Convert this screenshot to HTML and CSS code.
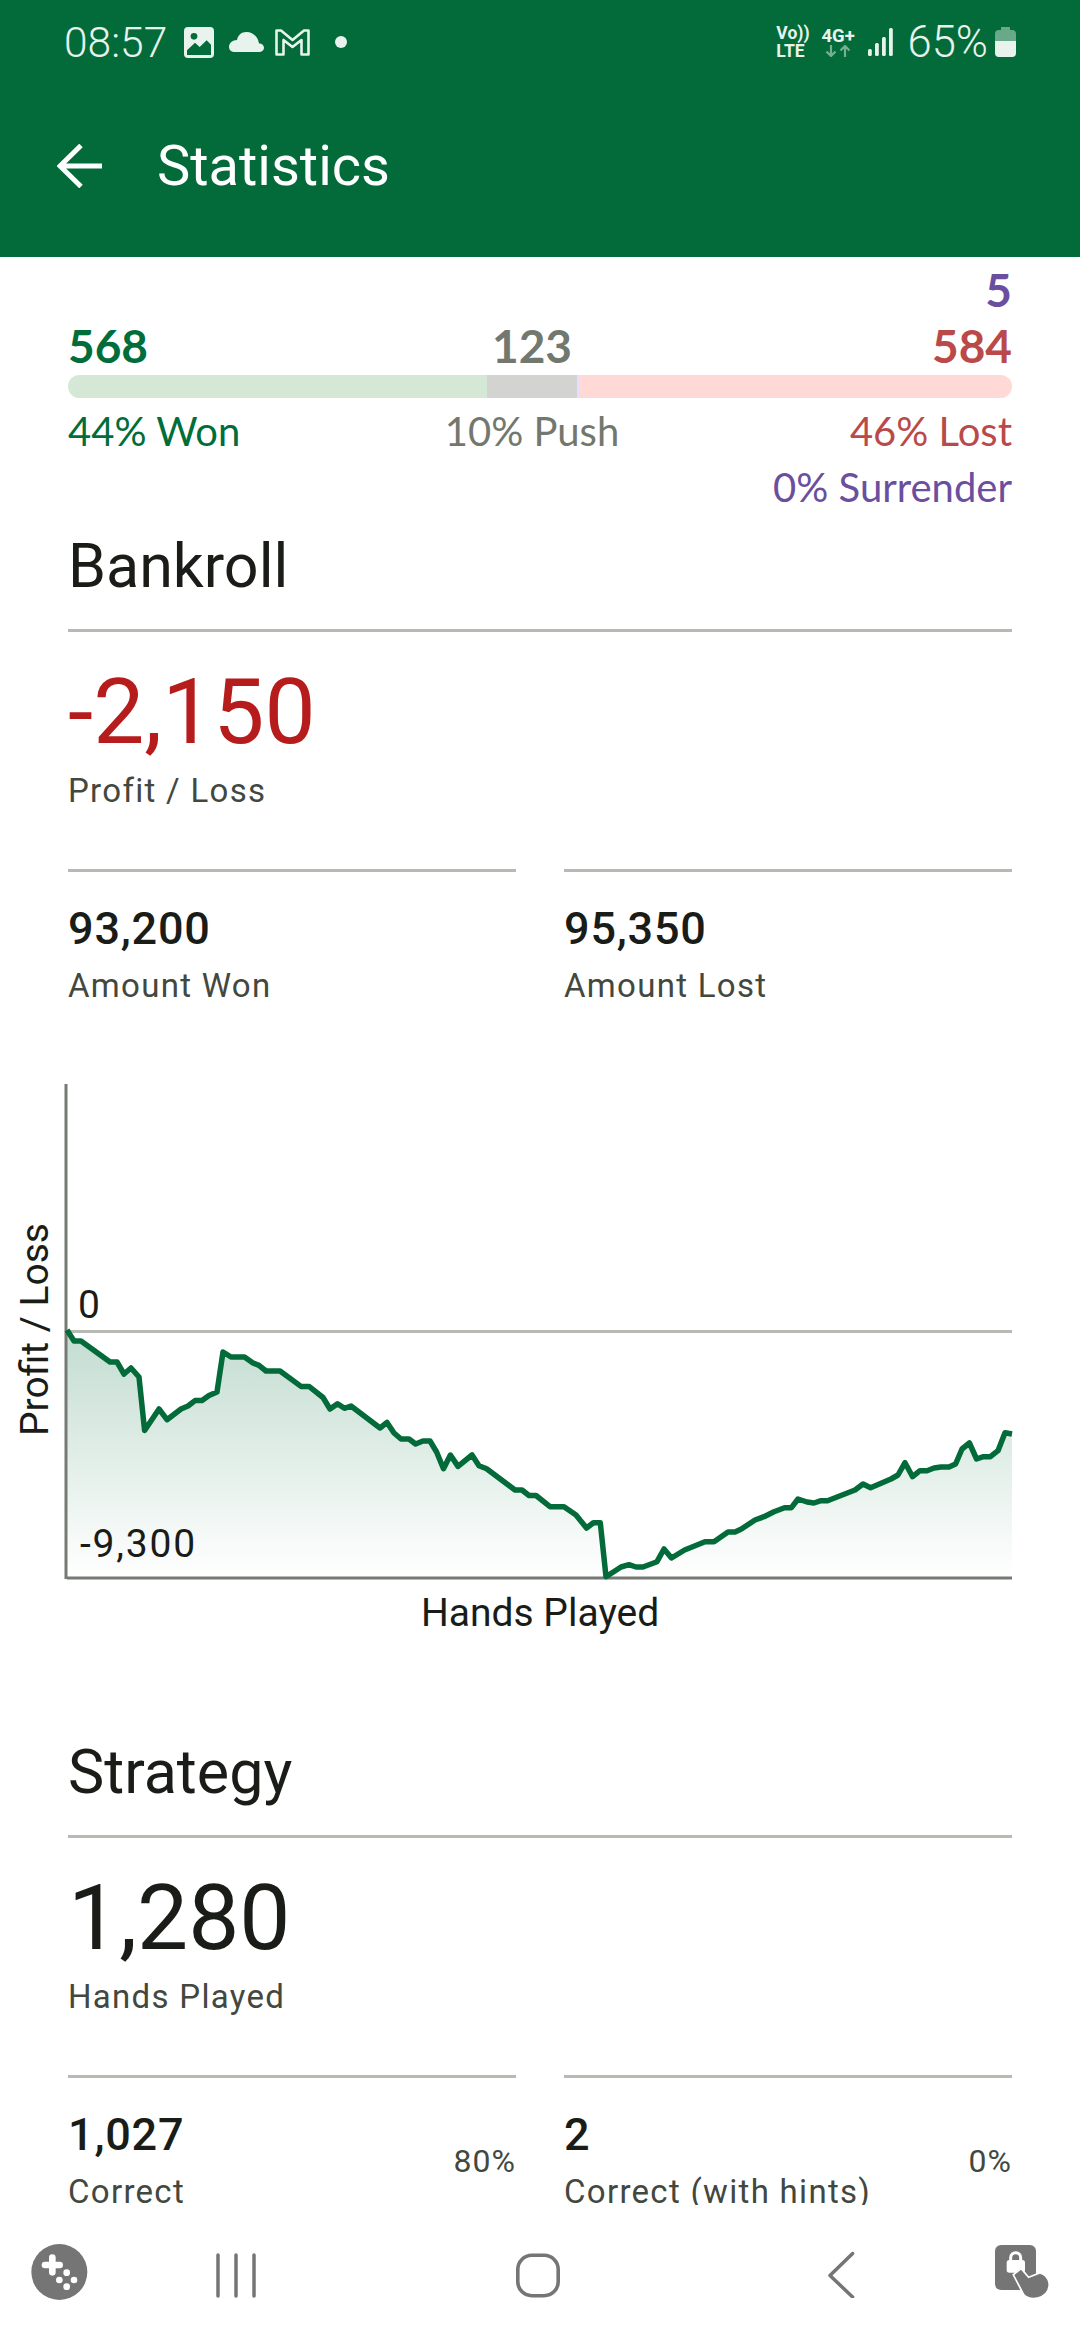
FILE: index.html
```html
<!DOCTYPE html>
<html>

<head>
    <title>Statistics</title>
    <meta charset="utf-8">
    <meta name="viewport" content="width=device-width, initial-scale=1">
    <link rel="stylesheet" href="styles.css">
</head>

<body>
    <header class="appbar">
        <div class="statusbar">
            <span class="clock">08:57</span>
            <svg class="ic-image" viewBox="0 0 90 93">
                <rect width="90" height="93" rx="12" fill="#e8f3ed"/>
                <circle cx="30" cy="28" r="10" fill="#036b3a"/>
                <path d="M9 84V70L33 47L47 60L68 40L81 53V84Z" fill="#036b3a"/>
            </svg>
            <svg class="ic-cloud" viewBox="0 0 35 20">
                <path d="M6 20H30C33 20 35 18 35 16C35 13.5 33 11.5 30 11.5C29 5 24 0 17.5 0C12 0 9 3.5 8 8C3.5 8 0 11 0 15C0 18 2.5 20 6 20Z" fill="#e8f3ed"/>
            </svg>
            <svg class="ic-mail" viewBox="0 0 35 27">
                <path d="M1.5 25.5V1.5H6L17.5 11L29 1.5H33.5V25.5H26.5V11L17.5 18L8.5 11V25.5Z" fill="none" stroke="#e8f3ed" stroke-width="2.6" stroke-linejoin="round"/>
            </svg>
            <span class="dot"></span>

            <div class="status-right">
                <div class="net-tag">
                    <span>Vo))</span>
                    <span>LTE</span>
                </div>
                <div class="net-tag net-4g">
                    <span>4G+</span>
                    <svg viewBox="0 0 26 12" width="26" height="12">
                        <path d="M6 0V11M1.5 6.5L6 11L10.500 6.500M20 12V1M15.500 5.500L20 1L24.500 5.500" fill="none" stroke="#e8f3ed" stroke-width="2.200" opacity="0.5"/>
                    </svg>
                </div>
                <svg class="ic-signal" viewBox="0 0 25 28">
                    <rect x="0" y="21" width="3.800" height="7" rx="1.500" fill="#e8f3ed"/>
                    <rect x="7" y="15" width="3.800" height="13" rx="1.500" fill="#e8f3ed"/>
                    <rect x="14" y="9" width="3.800" height="19" rx="1.500" fill="#e8f3ed"/>
                    <rect x="21" y="0" width="3.800" height="28" rx="1.500" fill="#e8f3ed"/>
                </svg>
                <span class="battery-text">65%</span>
                <svg class="ic-battery" viewBox="0 0 21 30">
                    <path d="M6 0H15V3H17A4 4 0 0 1 21 7V14H0V7A4 4 0 0 1 4 3H6Z" fill="#e8f3ed" opacity="0.45"/>
                    <path d="M0 14H21V26A4 4 0 0 1 17 30H4A4 4 0 0 1 0 26Z" fill="#e8f3ed"/>
                </svg>
            </div>
        </div>
        <div class="toolbar">
            <svg class="ic-back" viewBox="0 0 45 44">
                <path d="M45 22H3M24 1.500L3 22L24 42.500" fill="none" stroke="#fff" stroke-width="5"/>
            </svg>
            <span class="toolbar-title">Statistics</span>
        </div>
    </header>

    <main class="content">
        <div class="count surrender five">5</div>
        <div class="tally">
            <span class="count won">568</span>
            <span class="count push">123</span>
            <span class="count lost">584</span>
        </div>
        <div class="bar">
            <div class="bar-won"></div>
            <div class="bar-push"></div>
            <div class="bar-surrender"></div>
            <div class="bar-lost"></div>
        </div>
        <div class="tally tally-labels">
            <span class="won">44% Won</span>
            <span class="push">10% Push</span>
            <span class="lost">46% Lost</span>
        </div>
        <div class="surrender-label surrender">0% Surrender</div>

        <h2 class="section-title">Bankroll</h2>
        <div class="big-number negative">-2,150</div>
        <div class="stat-label">Profit / Loss</div>

        <div class="stat-grid">
            <div class="stat">
                <div class="stat-body">
                    <div class="stat-number">93,200</div>
                    <div class="stat-label">Amount Won</div>
                </div>
            </div>
            <div class="stat">
                <div class="stat-body">
                    <div class="stat-number">95,350</div>
                    <div class="stat-label">Amount Lost</div>
                </div>
            </div>
        </div>

        <svg class="chart" viewBox="0 1080 1080 641">
            <defs>
                <linearGradient id="areaFade" gradientUnits="userSpaceOnUse" x1="0" y1="1330" x2="0" y2="1578">
                    <stop offset="0" stop-color="#006d3b" stop-opacity="0.24"/>
                    <stop offset="1" stop-color="#006d3b" stop-opacity="0"/>
                </linearGradient>
            </defs>
            <polygon fill="url(#areaFade)" points="67,1330 74,1341 81,1341 110,1362 117,1362 124,1374 131,1368 139,1377 144.600,1430.500 159,1409 167,1419.700 181,1409 188,1406 195,1400.600 202,1400.600 209,1395.600 217,1392 223,1352 231,1357 244.500,1357 253,1363 259,1365.400 266,1371 280,1371 301,1386.400 309,1386.400 323,1397.500 330,1409 337.500,1403.700 344.400,1408.300 351,1406 380,1428 387,1422.400 394,1433 401,1439 409,1439 415.600,1444 423,1441 430,1441 436.600,1452 443.500,1468.700 450.400,1455 458,1466.400 472,1455 479,1465.700 486.600,1468.700 515,1490 522,1490 529,1495.500 536,1495.500 550,1506.700 564,1506.700 576,1515 586.500,1528 593.400,1522.700 600.300,1522.700 606,1576.700 621,1567 629,1564.700 636,1567 643,1567 657,1561.700 664,1549 671.500,1558 684.600,1550 705,1541.700 714,1541.700 728,1532 735,1532 741.400,1529 755,1520 764,1516.700 774,1511.700 784.500,1507.700 791.400,1507.700 798,1499 807,1502 814,1503 821,1500.700 827.500,1500.700 855,1490 863,1484 870.600,1487.700 891,1479 898,1475 905,1462.700 912.600,1476.700 920,1470.700 927,1470.700 934,1468 941,1467 949,1467 955.600,1464 962,1449 969.400,1443 976.600,1459 983.500,1456.700 990.400,1456.700 998,1450.700 1005,1432.700 1012,1434 1012,1578 67,1578"/>
            <rect class="zero-line" x="67" y="1330" width="945" height="3"/>
            <rect class="axis-line" x="64.500" y="1084" width="3" height="495"/>
            <rect class="axis-line" x="67" y="1576.500" width="945" height="3"/>
            <polyline class="chart-line" points="67,1330 74,1341 81,1341 110,1362 117,1362 124,1374 131,1368 139,1377 144.600,1430.500 159,1409 167,1419.700 181,1409 188,1406 195,1400.600 202,1400.600 209,1395.600 217,1392 223,1352 231,1357 244.500,1357 253,1363 259,1365.400 266,1371 280,1371 301,1386.400 309,1386.400 323,1397.500 330,1409 337.500,1403.700 344.400,1408.300 351,1406 380,1428 387,1422.400 394,1433 401,1439 409,1439 415.600,1444 423,1441 430,1441 436.600,1452 443.500,1468.700 450.400,1455 458,1466.400 472,1455 479,1465.700 486.600,1468.700 515,1490 522,1490 529,1495.500 536,1495.500 550,1506.700 564,1506.700 576,1515 586.500,1528 593.400,1522.700 600.300,1522.700 606,1576.700 621,1567 629,1564.700 636,1567 643,1567 657,1561.700 664,1549 671.500,1558 684.600,1550 705,1541.700 714,1541.700 728,1532 735,1532 741.400,1529 755,1520 764,1516.700 774,1511.700 784.500,1507.700 791.400,1507.700 798,1499 807,1502 814,1503 821,1500.700 827.500,1500.700 855,1490 863,1484 870.600,1487.700 891,1479 898,1475 905,1462.700 912.600,1476.700 920,1470.700 927,1470.700 934,1468 941,1467 949,1467 955.600,1464 962,1449 969.400,1443 976.600,1459 983.500,1456.700 990.400,1456.700 998,1450.700 1005,1432.700 1012,1434"/>
            <text class="chart-text" x="78" y="1318">0</text>
            <text class="chart-text tick-wide" x="80" y="1557">-9,300</text>
            <text class="chart-text" x="421" y="1626">Hands Played</text>
            <text class="chart-text" transform="translate(47.500 1436) rotate(-90)">Profit / Loss</text>
        </svg>

        <h2 class="section-title">Strategy</h2>
        <div class="big-number">1,280</div>
        <div class="stat-label">Hands Played</div>

        <div class="stat-grid">
            <div class="stat">
                <div class="stat-body">
                    <div class="stat-number">1,027</div>
                    <div class="stat-label">Correct</div>
                </div>
                <span class="stat-percent">80%</span>
            </div>
            <div class="stat">
                <div class="stat-body">
                    <div class="stat-number">2</div>
                    <div class="stat-label">Correct (with hints)</div>
                </div>
                <span class="stat-percent">0%</span>
            </div>
        </div>
    </main>

    <nav class="navbar">
        <svg class="nav-game" viewBox="0 0 240 225">
            <circle cx="118" cy="111" r="84" fill="#757575"/>
            <path d="M97 68V112M75 90H119" stroke="#fff" stroke-width="20" stroke-linecap="round"/>
            <circle cx="140" cy="113" r="10" fill="#fff"/>
            <circle cx="118" cy="135" r="10" fill="#fff"/>
            <circle cx="162" cy="135" r="10" fill="#fff"/>
            <circle cx="140" cy="155" r="10" fill="#fff"/>
        </svg>
        <svg class="nav-recents" viewBox="0 0 52 50">
            <path d="M8 7V48M26 7V48M44 7V48" stroke="#757575" stroke-width="3.500" stroke-linecap="round"/>
        </svg>
        <svg class="nav-home" viewBox="0 0 52 50">
            <rect x="5.800" y="7.300" width="40.400" height="40.400" rx="14" fill="none" stroke="#757575" stroke-width="3.600"/>
        </svg>
        <svg class="nav-back" viewBox="0 0 31 50">
            <path d="M26.600 5.500L4 27.500L26.600 49" fill="none" stroke="#757575" stroke-width="3.500" stroke-linecap="round" stroke-linejoin="round"/>
        </svg>
        <svg class="nav-secure" viewBox="0 0 225 225">
            <rect x="30" y="30" width="123" height="135" rx="18" fill="#757575"/>
            <path d="M77 80V68A15 15 0 0 1 107 68V80" fill="none" stroke="#fff" stroke-width="9"/>
            <rect x="65" y="75" width="55" height="38" rx="8" fill="#fff"/>
            <path d="M88 120L118 177Q132 192 157 187Q192 177 190 145Q187 123 165 116L130 130L108 104Z" fill="#757575" stroke="#fff" stroke-width="10" paint-order="stroke"/>
        </svg>
    </nav>
</body>

</html>
```

FILE: styles.css
```css
html,
body {
    margin: 0;
    height: 100%;
    overflow: hidden;
}

body {
    display: flex;
    flex-direction: column;
    height: 2340px;
    background-color: #fff;
    color: #1a1c18;
    font-family: Roboto, "Liberation Sans", sans-serif;
}

/* top bars */

.appbar {
    height: 257px;
    flex-shrink: 0;
    background-color: #036b3a;
}

.statusbar {
    display: flex;
    align-items: center;
    height: 84px;
    padding: 0 64px 0 64px;
    color: #e8f3ed;
}

.clock {
    width: 102px;
    font-size: 42.500px;
    font-weight: 300;
    white-space: nowrap;
}

.ic-image {
    width: 30px;
    height: 31px;
    margin-left: 18px;
}

.ic-cloud {
    width: 35px;
    height: 20px;
    margin-left: 15px;
}

.ic-mail {
    width: 35px;
    height: 27px;
    margin-left: 11px;
}

.dot {
    width: 12px;
    height: 12px;
    margin-left: 25px;
    border-radius: 50%;
    background-color: #e8f3ed;
}

.status-right {
    display: flex;
    align-items: center;
    margin-left: auto;
}

.net-tag {
    display: flex;
    flex-direction: column;
    font-size: 17.500px;
    font-weight: 700;
    line-height: 18px;
}

.net-4g {
    align-items: center;
    width: 33px;
    margin-left: 12px;
    font-size: 18.500px;
}

.ic-signal {
    width: 25px;
    height: 28px;
    margin-left: 13px;
}

.battery-text {
    margin-left: 15px;
    font-size: 43.500px;
    font-weight: 300;
}

.ic-battery {
    width: 21px;
    height: 30px;
    margin-left: 7px;
}

.toolbar {
    display: flex;
    align-items: center;
    height: 164px;
    padding: 0 0 9px 57px;
}

.ic-back {
    width: 45px;
    height: 44px;
}

.toolbar-title {
    margin-left: 55px;
    color: #fff;
    font-size: 56px;
}

/* scrolling part */

.content {
    flex: 1;
    min-height: 0;
    padding: 0 68px;
    overflow: hidden;
}

.count {
    font-family: Lato, sans-serif;
    font-size: 46px;
    font-weight: 700;
    line-height: 56px;
}

.five {
    margin-top: 5px;
    text-align: right;
}

.tally {
    display: grid;
    grid-template-columns: 314px 300px 1fr;
}

.tally .push {
    text-align: center;
}

.tally .lost {
    text-align: right;
}

.tally-labels,
.surrender-label {
    font-family: Lato, sans-serif;
    font-size: 40px;
    line-height: 56px;
}

.tally-labels {
    margin-top: 5px;
}

.surrender-label {
    text-align: right;
}

.won {
    color: #006d3b;
}

.push {
    color: #73786f;
}

.lost {
    color: #ba4a4a;
}

.surrender {
    color: #6b4f9e;
}

.bar {
    display: flex;
    height: 23px;
    margin-top: 1px;
    overflow: hidden;
    border-radius: 12px;
}

.bar-won {
    width: 419px;
    background-color: #d4e8d5;
}

.bar-push {
    width: 90px;
    background-color: #d3d4d1;
}

.bar-surrender {
    width: 3px;
    background-color: #e8ddff;
}

.bar-lost {
    flex: 1;
    background-color: #ffd9d6;
}

.section-title {
    margin: 11px 0 0;
    padding-bottom: 23px;
    border-bottom: 3px solid #b6bab3;
    font-size: 61px;
    font-weight: 400;
    line-height: 80px;
}

.big-number {
    margin-top: 25px;
    font-size: 91px;
    line-height: 110px;
}

.negative {
    color: #b71c1c;
}

.stat-label {
    margin-top: 3px;
    color: #43483f;
    font-size: 33px;
    letter-spacing: 1.300px;
    line-height: 44px;
    white-space: nowrap;
}

.big-number + .stat-label {
    margin-top: 2px;
}

.stat-grid {
    display: grid;
    grid-template-columns: 448px 448px;
    column-gap: 48px;
    margin-top: 56px;
}

.stat {
    display: flex;
    align-items: center;
    justify-content: space-between;
    padding-top: 29px;
    border-top: 3px solid #b6bab3;
}

.stat-number {
    font-size: 45px;
    font-weight: 500;
    letter-spacing: 0.800px;
    line-height: 56px;
}

.stat-number + .stat-label {
    margin-top: 7px;
}

.stat-percent {
    color: #43483f;
    font-size: 32px;
    letter-spacing: 1px;
    line-height: 44px;
}

/* chart */

.chart {
    display: block;
    width: 1080px;
    height: 641px;
    margin: 72px -68px 0;
}

.zero-line {
    fill: #b6bab3;
}

.axis-line {
    fill: #757a72;
}

.chart-line {
    fill: none;
    stroke: #036b3a;
    stroke-width: 5.500;
    stroke-linejoin: round;
}

.chart-text {
    fill: #1a1c18;
    font-family: Roboto, sans-serif;
    font-size: 39px;
}

.tick-wide {
    letter-spacing: 1.800px;
}

/* system nav */

.navbar {
    display: flex;
    align-items: center;
    height: 135px;
    flex-shrink: 0;
    padding-left: 20px;
    background-color: #fff;
}

.nav-game {
    width: 80px;
    height: 75px;
}

.nav-recents {
    width: 52px;
    height: 50px;
    margin-left: 110px;
}

.nav-home {
    width: 52px;
    height: 50px;
    margin-left: 250px;
}

.nav-back {
    width: 31px;
    height: 50px;
    margin-left: 262px;
}

.nav-secure {
    width: 75px;
    height: 75px;
    margin-left: 128px;
}
```
